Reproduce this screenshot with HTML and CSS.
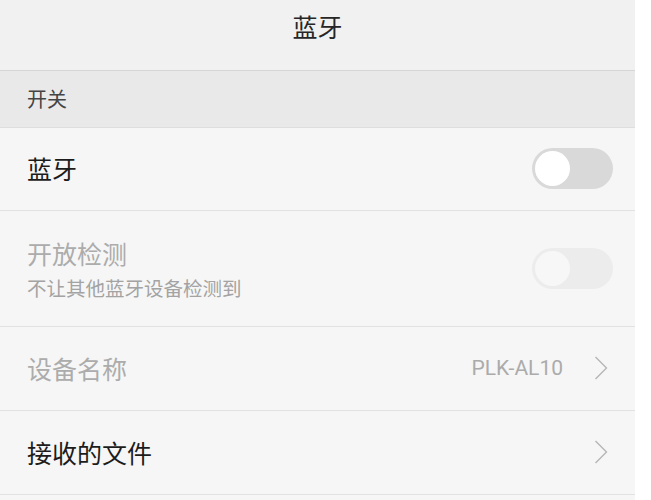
FILE: index.html
```html
<!DOCTYPE html>
<html>
<head>
<meta charset='utf-8'/>
<meta name='viewport' content='width=device-width,initial-scale=1'/>
<link rel="stylesheet" href="styles.css">
</head>
<body>
<div id='page'>
<div class='titlebar'>蓝牙</div>
<div class='section'>开关</div>
<div class='row row-switch'>
<div class='text'><span class='label'>蓝牙</span></div>
<span class='switch'><span class='knob'></span></span>
</div>
<div class='row row-tall row-switch disabled'>
<div class='text text-shift'>
<span class='label'>开放检测</span>
<span class='sub'>不让其他蓝牙设备检测到</span>
</div>
<span class='switch'><span class='knob'></span></span>
</div>
<div class='row disabled'>
<div class='text'><span class='label'>设备名称</span></div>
<span class='value'>PLK-AL10</span>
<svg class='chevron' width='14' height='24' viewBox='0 0 14 24'><polyline points='1.5,1 12.5,12 1.5,23' fill='none' stroke='#b4b4b4' stroke-width='1.3'/></svg>
</div>
<div class='row'>
<div class='text'><span class='label'>接收的文件</span></div>
<svg class='chevron' width='14' height='24' viewBox='0 0 14 24'><polyline points='1.5,1 12.5,12 1.5,23' fill='none' stroke='#b4b4b4' stroke-width='1.3'/></svg>
</div>
<div class='tail'></div>
</div>
</body>
</html>
```
FILE: styles.css
```css
body {
    margin: 0;
    background: #fff;
    font-family: "Noto Sans CJK SC", "Liberation Sans", sans-serif;
}
div#page {
    width: 635px;
    background: #f6f6f6;
}
.titlebar {
    height: 71px;
    box-sizing: border-box;
    line-height: 53px;
    text-align: center;
    font-size: 25px;
    color: #262626;
    background: #f1f1f1;
    border-bottom: 1px solid #d6d6d6;
}
.section {
    height: 57px;
    box-sizing: border-box;
    padding: 0 0 0 27px;
    line-height: 56px;
    font-size: 20px;
    color: #444;
    background: #e9e9e9;
    border-bottom: 1px solid #dedede;
}
.row {
    display: flex;
    align-items: center;
    height: 84px;
    box-sizing: border-box;
    padding: 0 27px 2px;
    border-bottom: 1px solid #e2e2e2;
}
.row-switch {
    height: 83px;
    padding-right: 22px;
}
.row-tall {
    height: 116px;
    padding-bottom: 0;
}
.text {
    flex: 1;
    display: flex;
    flex-direction: column;
}
.text-shift {
    padding-top: 1px;
}
.label {
    font-size: 25px;
    line-height: 30px;
    color: #1c1c1c;
}
.sub {
    margin-top: 7px;
    font-size: 19.5px;
    line-height: 26px;
    color: #a3a3a3;
}
.disabled .label {
    color: #acacac;
}
.switch {
    display: flex;
    align-items: center;
    width: 81px;
    height: 41px;
    box-sizing: border-box;
    padding: 0 3px;
    border-radius: 21px;
    background: #d9d9d9;
}
.knob {
    width: 35px;
    height: 35px;
    border-radius: 50%;
    background: #fff;
}
.disabled .switch {
    background: #ececec;
}
.disabled .knob {
    background: #f7f7f7;
}
.value {
    margin-right: 31px;
    font-family: Roboto, "Liberation Sans", sans-serif;
    font-size: 21px;
    color: #ababab;
}
.chevron {
    display: block;
}
.tail {
    height: 6px;
}
```
